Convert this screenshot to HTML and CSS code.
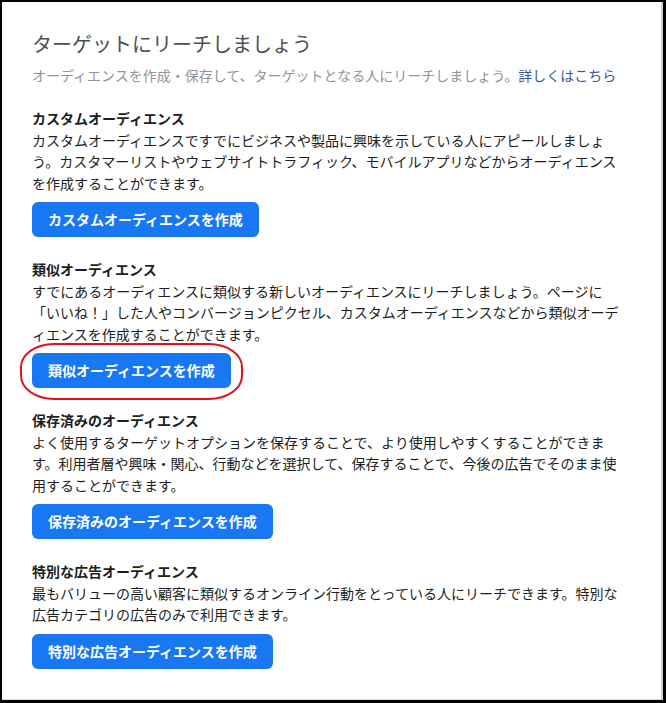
FILE: index.html
```html
<!DOCTYPE html>
<html lang="ja">
<head>
<meta charset="utf-8">
<title>ターゲットにリーチしましょう</title>
<link rel="stylesheet" href="styles.css">
</head>
<body>
<div class="frame">
  <div class="content">
    <h1 class="title">ターゲットにリーチしましょう</h1>
    <p class="subtitle">オーディエンスを作成・保存して、ターゲットとなる人にリーチしましょう。<a class="link" href="#">詳しくはこちら</a></p>

    <section class="section">
      <h2 class="heading">カスタムオーディエンス</h2>
      <p class="desc">カスタムオーディエンスですでにビジネスや製品に興味を示している人にアピールしましょう。カスタマーリストやウェブサイトトラフィック、モバイルアプリなどからオーディエンスを作成することができます。</p>
      <div class="btn-wrap"><button class="btn">カスタムオーディエンスを作成</button></div>
    </section>

    <section class="section">
      <h2 class="heading">類似オーディエンス</h2>
      <p class="desc">すでにあるオーディエンスに類似する新しいオーディエンスにリーチしましょう。ページに「いいね！」した人やコンバージョンピクセル、カスタムオーディエンスなどから類似オーディエンスを作成することができます。</p>
      <div class="btn-wrap"><button class="btn">類似オーディエンスを作成</button><span class="highlight"></span></div>
    </section>

    <section class="section">
      <h2 class="heading">保存済みのオーディエンス</h2>
      <p class="desc">よく使用するターゲットオプションを保存することで、より使用しやすくすることができます。利用者層や興味・関心、行動などを選択して、保存することで、今後の広告でそのまま使用することができます。</p>
      <div class="btn-wrap"><button class="btn">保存済みのオーディエンスを作成</button></div>
    </section>

    <section class="section">
      <h2 class="heading">特別な広告オーディエンス</h2>
      <p class="desc">最もバリューの高い顧客に類似するオンライン行動をとっている人にリーチできます。特別な広告カテゴリの広告のみで利用できます。</p>
      <div class="btn-wrap"><button class="btn">特別な広告オーディエンスを作成</button></div>
    </section>
  </div>
</div>
</body>
</html>
```
FILE: styles.css
```css
* { box-sizing: border-box; }
html, body {
  margin: 0;
  padding: 0;
  background: #000;
  height: 100%;
}
body {
  font-family: "Noto Sans CJK JP", "Noto Sans", sans-serif;
  padding: 2px 3px 3px 2px;
}
.frame {
  background: #fff;
  height: 100%;
  border-right: 2px solid #cfcfcf;
  border-bottom: 1px solid #dcdcdc;
  padding: 28px 0 0 30px;
}
.content {
  width: 588px;
}
.title {
  margin: 0;
  font-size: 20px;
  line-height: 28px;
  font-weight: 400;
  color: #4b4f56;
}
.subtitle {
  margin: 6.5px 0 0;
  font-size: 14px;
  line-height: 21px;
  color: #90949c;
}
.link {
  color: #385898;
  text-decoration: none;
}
.section {
  margin-top: 22px;
}
.subtitle + .section {
  margin-top: 22.5px;
}
.heading {
  margin: 0;
  font-size: 14px;
  line-height: 21.5px;
  font-weight: 700;
  color: #1c1e21;
}
.desc {
  margin: 0;
  font-size: 14px;
  line-height: 21.5px;
  color: #1c1e21;
}
.btn-wrap {
  position: relative;
  display: inline-block;
  margin-top: 8px;
  vertical-align: top;
}
.btn {
  display: block;
  height: 35px;
  padding: 0 16px;
  border: none;
  border-radius: 6px;
  background: #1877f2;
  color: #fff;
  font-family: "Noto Sans CJK JP", "Noto Sans", sans-serif;
  font-size: 14px;
  font-weight: 700;
  line-height: 35px;
  cursor: pointer;
}
.highlight {
  position: absolute;
  left: -12px;
  top: -10px;
  right: -12px;
  bottom: -12px;
  border: 2px solid #e3121c;
  border-radius: 34px / 24px;
  pointer-events: none;
}
```
